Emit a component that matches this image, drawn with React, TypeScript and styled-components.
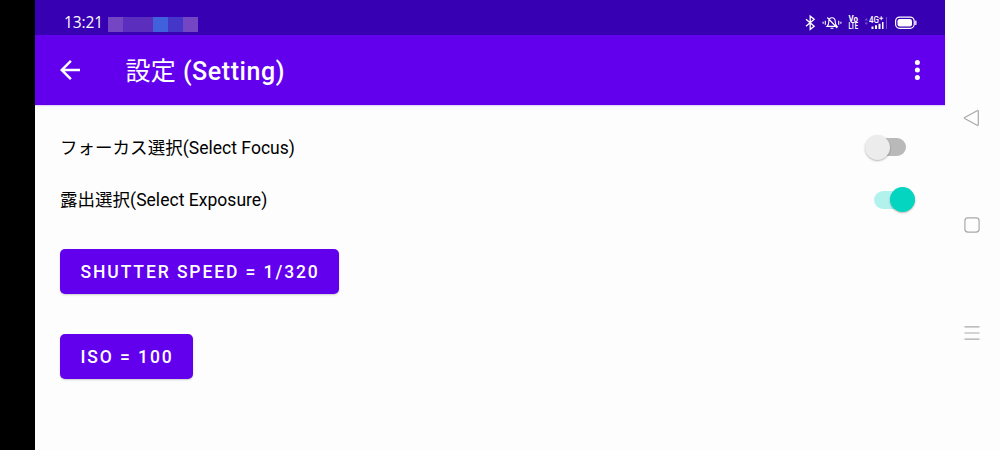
import { useState } from "react";
import styled, { createGlobalStyle, ThemeProvider } from "styled-components";

const theme = {
  colors: {
    primary: "#6200ee",
    primaryDark: "#3700b3",
    secondary: "#03d5c0",
    background: "#fdfdfd",
    nav: "#a9a9a9",
  },
};

const GlobalStyle = createGlobalStyle`
  * {
    box-sizing: border-box;
  }

  body {
    margin: 0;
    background: #fdfdfd;
    font-family: Roboto, "Noto Sans CJK JP", sans-serif;
  }
`;

const Screen = styled.div`
  display: flex;
  width: 1000px;
  height: 450px;
  overflow: hidden;
  background: ${({ theme }) => theme.colors.background};
`;

const Cutout = styled.div`
  flex: 0 0 35px;
  background: #000;
`;

const Main = styled.main`
  flex: 1;
  display: flex;
  flex-direction: column;
`;

const StatusBar = styled.div`
  display: flex;
  justify-content: space-between;
  height: 35px;
  padding: 0 28px 0 29px;
  background: ${({ theme }) => theme.colors.primaryDark};
`;

const StatusLeft = styled.div`
  display: flex;
  align-items: flex-start;
`;

const Clock = styled.span`
  width: 44px;
  padding-top: 12px;
  color: #fff;
  font-family: "Open Sans", sans-serif;
  font-size: 15.5px;
  letter-spacing: -0.1px;
  line-height: 20px;
  white-space: nowrap;
`;

const Notifications = styled.div`
  display: flex;
  padding-top: 17px;
`;

const Block = styled.span<{ $color: string }>`
  width: 15px;
  height: 15px;
  background: ${({ $color }) => $color};
`;

const StatusIcons = styled.svg`
  width: 118px;
  height: 35px;
  color: #fff;
`;

const AppBar = styled.header`
  display: flex;
  align-items: center;
  height: 70px;
  padding: 0 13px 0 20px;
  background: ${({ theme }) => theme.colors.primary};
  color: #fff;
  box-shadow: 0 1px 1px rgba(98, 0, 238, 0.16);
`;

const IconButton = styled.button`
  display: flex;
  padding: 0;
  border: none;
  background: none;
  color: inherit;
`;

const Title = styled.h1`
  flex: 1;
  margin: 0 0 0 40.5px;
  padding-top: 3px;
  font-size: 25px;
  font-weight: 500;
  letter-spacing: 0.57px;
  line-height: 30px;
`;

const Kanji = styled.span`
  font-weight: 400;
  letter-spacing: 0.3px;
`;

const Content = styled.div`
  display: flex;
  flex-direction: column;
  align-items: flex-start;
  padding: 16px 29px 0 25px;
`;

const Row = styled.div`
  display: flex;
  align-items: center;
  justify-content: space-between;
  width: 100%;
  height: 52.5px;
`;

const Label = styled.span`
  padding-top: 1px;
  color: #000;
  font-size: 17.5px;
  letter-spacing: 0.03px;
  line-height: 24px;
`;

const Switch = styled.button<{ $on: boolean }>`
  display: flex;
  align-items: center;
  width: 51px;
  height: 25px;
  padding: 0 ${({ $on }) => ($on ? "1px 0 9px" : "10px 0 0")};
  border: none;
  background: none;
`;

const Track = styled.span<{ $on: boolean }>`
  display: flex;
  align-items: center;
  justify-content: ${({ $on }) => ($on ? "flex-end" : "flex-start")};
  width: 41px;
  height: 18px;
  border-radius: 9px;
  background: ${({ $on }) =>
    $on
      ? "linear-gradient(#b3f2ec, #b3f2ec)"
      : "linear-gradient(90deg, transparent 12px, #b9b9b9 12px)"};
`;

const Thumb = styled.span<{ $on: boolean }>`
  width: 25px;
  height: 25px;
  border-radius: 50%;
  background: ${({ $on, theme }) => ($on ? theme.colors.secondary : "#ececec")};
  box-shadow: 0 1px 2px rgba(0, 0, 0, 0.28);
`;

const Button = styled.button<{ $top: number }>`
  height: 45px;
  margin-top: ${({ $top }) => $top}px;
  padding: 1px 19px 0 20.5px;
  border: none;
  border-radius: 5px;
  background: ${({ theme }) => theme.colors.primary};
  box-shadow: 0 1px 2px rgba(0, 0, 0, 0.2);
  color: #fff;
  font-family: inherit;
  font-size: 17.5px;
  font-weight: 500;
  letter-spacing: 1.9px;
  white-space: nowrap;
`;

const NavBar = styled.nav`
  display: flex;
  flex: 0 0 55px;
  flex-direction: column;
  align-items: center;
  justify-content: center;
  gap: 83.5px;
  padding-right: 1px;
  color: ${({ theme }) => theme.colors.nav};
`;

const BLOCKS = ["#7446c4", "#5c2ebd", "#5c2ebd", "#4160dc", "#4336c8", "#7446c4"];

const Status = () => (
  <StatusIcons viewBox="799 0 118 35" fill="none" stroke="currentColor">
    {/* bluetooth */}
    <path d="M806 19.2l8.2 7-4 3.1V16.2l4 3.1-8.2 7" strokeWidth="1.3" />
    {/* muted bell */}
    <path
      d="M827 26.4h10c-1.5-1.3-1.7-2.6-1.7-4.2 0-2.4-1.3-4.4-3.3-4.4s-3.3 2-3.3 4.4c0 1.6-.2 2.9-1.7 4.2zM830.5 28.3h3M827.3 17.5l10 10.5"
      strokeWidth="1.1"
    />
    <path d="M825.3 20.8v4M823.1 21.8v2M838.7 20.8v4M840.9 21.8v2" strokeWidth="1.1" />
    <g
      fill="currentColor"
      stroke="none"
      fontFamily="Roboto, sans-serif"
      fontWeight="700"
    >
      <text x="848.5" y="22" fontSize="8.5" textLength="9.5" lengthAdjust="spacingAndGlyphs">
        Vo
      </text>
      <text x="848.5" y="29" fontSize="8.5" textLength="9.5" lengthAdjust="spacingAndGlyphs">
        LTE
      </text>
      <text x="869" y="22.8" fontSize="8.5" fontWeight="500" textLength="10" lengthAdjust="spacingAndGlyphs">
        4G
      </text>
      <path d="M880.7 16.2h1v1.5h1.5v1h-1.5v1.5h-1v-1.5h-1.5v-1h1.5z" />
      <path d="M871.5 26.5h2v2.5h-2zM875 25.2h2v3.8h-2zM878.5 23.8h2v5.2h-2zM882 22h1.5v7H882z" />
      <path d="M864.5 20.5l1.8-2.5 1.8 2.5zM864.5 22.5l1.8 2.5 1.8-2.5zM886 17h1v12h-1z" opacity=".3" />
      <rect x="897.5" y="19" width="14.5" height="7.5" rx="2.2" />
      <rect x="915.2" y="20.5" width="1.3" height="4.5" rx=".6" />
    </g>
    <rect x="895.6" y="17.1" width="18.6" height="11.2" rx="4" strokeWidth="1.2" />
  </StatusIcons>
);

type SwitchRowProps = {
  label: string;
  initial: boolean;
};

const SwitchRow = ({ label, initial }: SwitchRowProps) => {
  const [on, setOn] = useState<boolean>(initial);

  return (
    <Row>
      <Label>{label}</Label>
      <Switch
        role="switch"
        aria-checked={on}
        aria-label={label}
        $on={on}
        onClick={() => setOn((on) => !on)}
      >
        <Track $on={on}>
          <Thumb $on={on} />
        </Track>
      </Switch>
    </Row>
  );
};

const App = () => {
  return (
    <ThemeProvider theme={theme}>
      <GlobalStyle />
      <Screen>
        <Cutout />
        <Main>
          <StatusBar>
            <StatusLeft>
              <Clock>13:21</Clock>
              <Notifications>
                {BLOCKS.map((color, index) => (
                  <Block key={`block_${index}`} $color={color} />
                ))}
              </Notifications>
            </StatusLeft>
            <Status />
          </StatusBar>
          <AppBar>
            <IconButton aria-label="Back">
              <svg width="30" height="30" viewBox="0 0 24 24" fill="currentColor">
                <path d="M20 11H7.83l5.59-5.59L12 4l-8 8 8 8 1.41-1.41L7.83 13H20v-2z" />
              </svg>
            </IconButton>
            <Title>
              <Kanji>設定</Kanji> (Setting)
            </Title>
            <IconButton aria-label="More options">
              <svg width="30" height="30" viewBox="0 0 24 24" fill="currentColor">
                <circle cx="12.3" cy="6" r="2" />
                <circle cx="12.3" cy="12" r="2" />
                <circle cx="12.3" cy="18" r="2" />
              </svg>
            </IconButton>
          </AppBar>
          <Content>
            <SwitchRow label="フォーカス選択(Select Focus)" initial={false} />
            <SwitchRow label="露出選択(Select Exposure)" initial={true} />
            <Button $top={23}>SHUTTER SPEED = 1/320</Button>
            <Button $top={40}>ISO = 100</Button>
          </Content>
        </Main>
        <NavBar>
          <svg width="24" height="24" fill="none" stroke="currentColor">
            <path
              d="M18.3 5.4v13.2q0 1.4-1.2.7L4.7 12.6q-.9-.6 0-1.2L17.1 4.7q1.2-.7 1.2.7z"
              strokeWidth="1.2"
            />
          </svg>
          <svg width="24" height="24" fill="none" stroke="currentColor">
            <rect x="4.9" y="4.9" width="14.2" height="14.2" rx="3" strokeWidth="1.2" />
          </svg>
          <svg width="24" height="24" fill="none" stroke="currentColor">
            <path d="M4.5 5.8h15M4.5 12h15M4.5 18.2h15" strokeWidth="1.2" />
          </svg>
        </NavBar>
      </Screen>
    </ThemeProvider>
  );
};

export default App;
